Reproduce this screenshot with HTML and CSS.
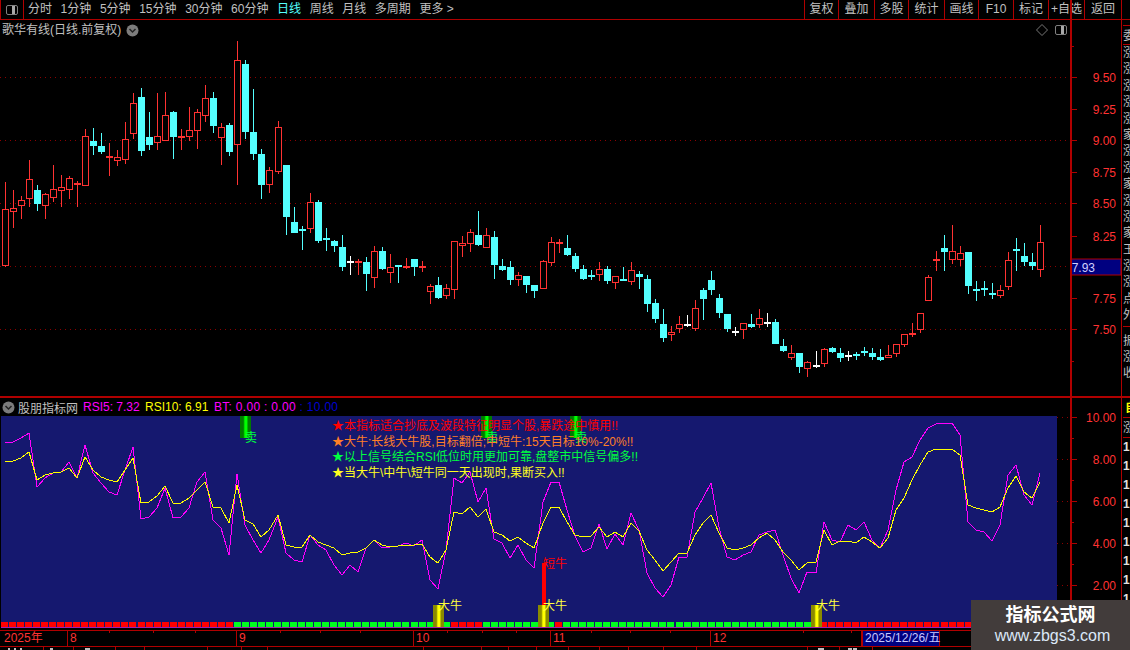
FILE: index.html
```html
<!DOCTYPE html>
<html lang="zh-CN">
<head>
  <meta charset="UTF-8">
  <title>歌华有线 日线</title>
  <link rel="stylesheet" href="styles.css">
</head>
<body>

<div class="app">
  <!-- top toolbar -->
  <div class="toolbar">
    <div class="layout-btn"><span class="toggle-icon"></span></div>
    <div class="periods">
      <span>分时</span><span>1分钟</span><span>5分钟</span><span>15分钟</span><span>30分钟</span><span>60分钟</span>
      <span class="active">日线</span><span>周线</span><span>月线</span><span>多周期</span><span>更多 &gt;</span>
    </div>
    <div class="tools">
      <span>复权</span><span>叠加</span><span>多股</span><span>统计</span><span>画线</span><span>F10</span><span>标记</span><span>+自选</span><span>返回</span>
    </div>
  </div>

  <!-- price panel -->
  <div class="main">
    <div class="plot">
      <svg id="price" class="canvas" viewBox="0 20 1070 376"></svg>
      <div class="plot-title">
        <span>歌华有线(日线.前复权)</span>
        <svg class="chevron" width="13" height="13" viewBox="0 0 13 13"><circle cx="6.5" cy="6.5" r="6" fill="#7c7c7c"/><path d="M3.5 5 L6.5 8 L9.5 5" fill="none" stroke="#222" stroke-width="1.5"/></svg>
      </div>
      <div class="plot-tools">
        <svg width="12" height="12" viewBox="0 0 12 12"><path d="M6 .5 L11.5 6 L6 11.5 L.5 6 Z" fill="none" stroke="#777"/></svg>
        <span class="toggle-icon"></span>
      </div>
    </div>
    <svg id="price-axis" class="axis" viewBox="1070 20 52 376"></svg>
    <div class="side">
      <div class="side-cell first">委</div>
      <div class="side-list">
        <span>涨</span><span>涨</span><span>涨</span><span>涨</span><span>涨</span><span>家</span><span>涨</span><span>涨</span><span>家</span><span>涨</span><span>涨</span><span>家</span><span>玉</span><span>涨</span><span>涨</span><span>点</span><span>外</span>
      </div>
      <div class="side-list lower">
        <span>振</span><span>涨</span><span>收</span>
      </div>
    </div>
  </div>

  <!-- indicator panel -->
  <div class="sub">
    <div class="sub-left">
      <div class="sub-head">
        <svg class="chevron" width="13" height="13" viewBox="0 0 13 13"><circle cx="6.5" cy="6.5" r="6" fill="#7c7c7c"/><path d="M3.5 5 L6.5 8 L9.5 5" fill="none" stroke="#222" stroke-width="1.5"/></svg>
        <span class="sub-name">股朋指标网</span>
        <span class="rsi5">RSI5: 7.32</span>
        <span class="rsi10">RSI10: 6.91</span>
        <span class="bt">BT: 0.00 : 0.00 <b>: 10.00</b></span>
      </div>
      <div class="sub-plot">
        <svg id="rsi" class="canvas" viewBox="0 416 1070 214"></svg>
        <ul class="notes">
          <li class="n-red">★本指标适合抄底及波段特征明显个股,暴跌途中慎用!!</li>
          <li class="n-orange">★大牛:长线大牛股,目标翻倍;中短牛:15天目标10%-20%!!</li>
          <li class="n-green">★以上信号结合RSI低位时用更加可靠,盘整市中信号偏多!!</li>
          <li class="n-yellow">★当大牛\中牛\短牛同一天出现时,果断买入!!</li>
        </ul>
      </div>
    </div>
    <svg id="rsi-axis" class="axis" viewBox="1070 398 52 232"></svg>
    <div class="side">
      <div class="side-cell pick">自</div>
      <div class="side-cell">涨</div>
      <div class="side-list nums">
        <span>1</span><span>1</span><span>1</span><span>1</span><span>1</span><span>1</span><span>1</span><span>1</span><span>1</span><span>1</span>
      </div>
    </div>
  </div>

  <!-- date strip -->
  <div class="dates">
    <span class="year">2025年</span>
    <span class="m8">8</span>
    <span class="m9">9</span>
    <span class="m10">10</span>
    <span class="m11">11</span>
    <span class="m12">12</span>
    <span class="cursor-date">2025/12/26/五</span>
  </div>
  <svg id="tabs" class="tabs" viewBox="0 0 1130 3"></svg>

  <div class="watermark">
    <div class="wm-name">指标公式网</div>
    <div class="wm-url">www.zbgs3.com</div>
  </div>
</div>

<script src="chart.js"></script>
</body>
</html>
```

FILE: styles.css
```css
* {
  box-sizing: border-box;
}
body {
  margin: 0;
  background-color: #000;
  font-family: "Liberation Sans", "Noto Sans CJK SC", sans-serif;
  font-size: 12px;
  color: #c0c0c0;
  overflow: hidden;
}
.app {
  position: relative;
  width: 1130px;
  height: 650px;
  display: flex;
  flex-direction: column;
  overflow: hidden;
}

/* toolbar */
.toolbar {
  height: 20px;
  display: flex;
  align-items: center;
  border-bottom: 1px solid #b00000;
  flex-shrink: 0;
}
.layout-btn {
  width: 24px;
  height: 19px;
  display: flex;
  align-items: center;
  justify-content: center;
  border-right: 1px solid #b00000;
  border-left: 1px solid #b00000;
}
.toggle-icon {
  display: block;
  width: 12px;
  height: 10px;
  border: 1px solid #808080;
  border-radius: 2px;
  background: linear-gradient(to right, #000 50%, #a8a8a8 50%, #a8a8a8 85%, #000 85%);
}
.periods {
  display: flex;
  gap: 8.6px;
  margin-left: 4px;
  line-height: 19px;
}
.periods .active {
  color: #54ffff;
}
.tools {
  display: flex;
  margin-left: auto;
  margin-right: 8px;
  border-left: 1px solid #b00000;
}
.tools span {
  width: 34px;
  height: 19px;
  line-height: 19px;
  text-align: center;
  border-right: 1px solid #b00000;
}
.tools span:nth-child(even) {
  width: 36px;
}
.tools span:nth-child(6),
.tools span:nth-child(7) {
  width: 35px;
}
.tools span:nth-child(9) {
  width: 37px;
}

/* panels */
.main {
  height: 378px;
  display: flex;
  border-bottom: 2px solid #b00000;
  flex-shrink: 0;
}
.plot {
  position: relative;
  width: 1070px;
  height: 376px;
}
.canvas {
  display: block;
  width: 1070px;
  height: 100%;
  shape-rendering: crispEdges;
}
.plot-title {
  position: absolute;
  left: 2px;
  top: 1px;
  display: flex;
  align-items: center;
  gap: 5px;
  line-height: 18px;
}
.plot-tools {
  position: absolute;
  right: 3px;
  top: 4px;
  display: flex;
  align-items: center;
  gap: 7px;
}
.axis {
  display: block;
  width: 52px;
  height: 100%;
  flex-shrink: 0;
  overflow: visible;
}
.axis text {
  fill: #ff3232;
  font-size: 12px;
  text-anchor: end;
}
.side {
  width: 8px;
  flex-shrink: 0;
  overflow: hidden;
  display: flex;
  flex-direction: column;
  white-space: nowrap;
  padding-left: 1px;
}
.side-cell {
  width: 16px;
  height: 20px;
  line-height: 20px;
  border-bottom: 1px solid #b00000;
}
.side-cell.first {
  margin-top: 5px;
  border-top: 1px solid #b00000;
}
.side-cell.pick {
  color: #ffff00;
  font-weight: bold;
  padding-left: 2px;
}
.side-list {
  display: flex;
  flex-direction: column;
  width: 16px;
}
.side-list span {
  height: 16.4px;
  line-height: 16px;
}
.side-list.lower {
  margin-top: 2px;
  border-top: 1px solid #b00000;
  padding-top: 6px;
}
.side-list.nums span {
  height: 19px;
  line-height: 19px;
  color: #e0e0e0;
  font-weight: bold;
}

.sub {
  height: 232px;
  display: flex;
  flex-shrink: 0;
}
.sub-left {
  width: 1070px;
  display: flex;
  flex-direction: column;
}
.sub-head {
  height: 18px;
  display: flex;
  align-items: center;
  padding-left: 2px;
  white-space: nowrap;
}
.sub-name {
  margin-left: 3px;
  width: 65px;
}
.rsi5 {
  color: #ff00ff;
  width: 62px;
}
.rsi10 {
  color: #ffff00;
  width: 69px;
}
.bt {
  color: #ff00ff;
  letter-spacing: .3px;
}
.bt b {
  color: #0000d0;
  font-weight: normal;
}
.sub-plot {
  position: relative;
  height: 214px;
}
.notes {
  position: absolute;
  left: 332px;
  top: 3px;
  margin: 0;
  padding: 0;
  list-style: none;
  line-height: 15.6px;
  white-space: nowrap;
}
.n-red { color: #ff0000; }
.n-orange { color: #ff7f27; }
.n-green { color: #00ff40; }
.n-yellow { color: #ffff20; }

/* date strip */
.dates {
  position: relative;
  height: 17px;
  display: flex;
  flex-shrink: 0;
  border-top: 1px solid #b00000;
  border-bottom: 1px solid #b00000;
  color: #ff3232;
  line-height: 15px;
}
.dates span {
  padding-left: 2px;
  border-right: 1px solid #b00000;
}
.year { width: 68px; padding-left: 4px !important; }
.m8 { width: 169px; }
.m9 { width: 177px; }
.m10 { width: 137px; }
.m11 { width: 160px; }
.m12 { width: 151px; }
.dates .cursor-date {
  width: 78px;
  padding-left: 2px;
  background-color: #000080;
  color: #c8c8ff;
  border-left: 1px solid #b00000;
  white-space: nowrap;
}
.tabs {
  display: block;
  width: 1130px;
  height: 3px;
  flex-shrink: 0;
  shape-rendering: crispEdges;
}

/* site stamp sitting over the corner */
.watermark {
  position: absolute;
  left: 971px;
  top: 600px;
  width: 159px;
  height: 50px;
  background-color: #423c3b;
  text-align: center;
}
.wm-name {
  margin-top: 3px;
  font-size: 18px;
  line-height: 24px;
  font-weight: bold;
  color: #fff;
}
.wm-url {
  font-size: 16px;
  line-height: 18px;
  color: #dbe8f8;
  padding-left: 4px;
}
```

FILE: chart.js
```js
const NS = 'http://www.w3.org/2000/svg';
const RED = '#ff3232', CYAN = '#54ffff', WHITE = '#ffffff';
const LINE_RED = '#b00000';

function el(parent, tag, attrs, text) {
  const node = document.createElementNS(NS, tag);
  Object.keys(attrs).forEach(k => node.setAttribute(k, attrs[k]));
  if (text) node.textContent = text;
  parent.appendChild(node);
  return node;
}

function xAt(i) {
  return Math.round(4.5 + 8.03 * i);
}

// type, body top, body bottom, high, low (page pixels)
const candles = [
  ['r',209,266,182,267],['r',208,212,190,228],['r',200,206,196,219],['r',179,199,160,207],['c',190,204,185,211],
  ['r',194,206,193,219],['r',189,198,165,202],['r',187,191,175,207],['r',178,190,176,199],['r',184,184,181,207],
  ['r',136,186,129,186],['c',141,146,128,155],['c',146,152,133,154],['r',157,157,143,176],['r',157,161,150,166],
  ['r',139,160,122,164],['r',103,134,93,139],['c',97,151,88,156],['c',137,145,112,150],['r',136,143,93,150],
  ['r',115,141,92,141],['c',112,137,111,159],['r',137,137,129,150],['r',130,137,107,141],['r',112,131,109,149],
  ['r',98,116,85,122],['c',98,126,92,133],['r',127,138,123,165],['c',125,152,123,156],['r',60,145,41,185],
  ['c',64,132,60,139],['c',132,154,89,160],['c',154,185,149,199],['r',170,185,167,193],['r',127,172,121,174],
  ['c',165,217,165,235],['c',222,233,207,233],['c',230,230,226,250],['r',202,229,193,233],['c',202,241,200,243],
  ['c',239,239,228,251],['c',241,246,240,252],['c',247,267,235,271],['w',262,262,256,275],['r',262,262,259,275],
  ['c',262,274,257,291],['r',251,278,246,288],['c',251,269,247,270],['r',267,273,254,283],['c',266,266,266,283],
  ['r',267,267,258,269],['c',259,267,259,276],['r',267,267,261,272],['r',286,292,284,304],['c',285,298,277,299],
  ['r',288,296,284,299],['r',241,290,241,299],['r',243,246,236,257],['r',232,244,229,252],['c',235,245,211,246],
  ['r',235,248,228,248],['c',237,265,231,279],['c',266,270,259,271],['c',267,280,261,285],['r',275,280,272,286],
  ['c',276,285,276,293],['c',285,291,285,298],['r',261,289,260,289],['r',242,263,237,266],['r',243,243,239,253],
  ['c',248,255,235,256],['c',256,269,253,272],['c',269,279,265,280],['c',276,276,270,280],['r',269,275,262,281],
  ['c',269,281,266,284],['r',276,283,276,289],['c',280,280,267,280],['r',270,282,262,285],['c',274,277,271,289],
  ['c',279,304,275,312],['c',303,319,299,323],['c',324,338,309,342],['r',332,335,326,341],['r',324,329,316,333],
  ['w',325,325,315,327],['r',308,329,300,331],['c',290,299,288,320],['c',280,290,271,295],['c',298,313,294,318],
  ['c',314,329,314,332],['w',332,332,327,336],['r',323,330,323,339],['c',324,327,314,328],['r',318,325,309,328],
  ['w',323,323,313,327],['c',322,344,319,344],['c',346,351,339,352],['r',353,358,345,360],['c',353,367,353,373],
  ['r',362,369,361,377],['w',366,366,351,368],['r',349,364,348,367],['c',348,352,347,353],['c',353,358,348,362],
  ['w',356,356,351,361],['c',355,355,352,360],['c',352,352,347,356],['c',353,357,348,360],['c',357,360,349,361],
  ['r',355,358,345,358],['r',344,354,344,357],['r',334,345,334,347],['r',334,334,323,337],['r',313,330,313,333],
  ['r',277,301,275,301],['r',260,260,251,271],['c',248,252,235,271],['r',251,260,225,264],['r',253,260,246,266],
  ['c',252,286,252,294],['c',290,290,281,301],['c',289,289,281,296],['c',294,294,283,299],['r',290,296,285,298],
  ['r',260,287,252,290],['c',250,250,238,271],['c',256,262,243,266],['c',262,266,253,270],['r',242,270,225,277]
];

const magenta = [442,442,438,433,487,478,473,472,462,478,445,473,483,492,495,470,447,519,517,508,488,518,517,508,482,472,520,528,555,474,
  525,540,553,540,517,553,560,562,535,545,550,565,575,565,572,548,540,548,547,546,
  543,546,540,580,589,550,478,483,472,502,488,539,543,558,545,560,568,502,482,482,510,536,552,548,524,549,534,545,513,530,
  573,588,597,585,557,557,512,498,483,527,557,560,555,552,535,532,530,555,578,593,572,573,522,540,542,525,530,522,540,548,
  530,490,462,457,440,428,424,423,423,435,522,530,532,541,525,475,465,495,505,473];
const yellow = [462,461,458,452,480,475,473,472,468,478,457,470,477,480,482,470,458,503,502,496,486,503,503,498,490,482,507,508,523,485,
  520,524,537,530,515,545,547,547,535,542,545,548,555,553,552,548,540,545,547,546,
  545,545,544,557,563,550,512,514,507,517,509,532,535,541,537,543,548,523,507,507,522,535,537,536,527,537,532,537,523,531,
  550,560,571,562,553,553,535,523,515,533,548,550,548,545,538,533,540,552,560,570,563,562,530,545,541,541,543,537,542,548,
  538,510,498,480,465,452,449,449,449,455,505,508,510,512,507,488,476,492,498,482];

function drawCandle(svg, c, i) {
  const x = xAt(i);
  const [type, top, bottom, hi, lo] = c;
  const color = type === 'r' ? RED : type === 'c' ? CYAN : WHITE;
  if (hi < top) el(svg, 'rect', { x: x, y: hi, width: 1, height: top - hi, fill: color });
  if (lo > bottom) el(svg, 'rect', { x: x, y: bottom, width: 1, height: lo - bottom, fill: color });
  if (top === bottom) {
    el(svg, 'rect', { x: x - 3, y: top - 1, width: 7, height: 2, fill: color });
  } else if (type === 'r') {
    el(svg, 'rect', { x: x - 2.5, y: top + 0.5, width: 6, height: bottom - top - 1, fill: '#000', stroke: color });
  } else {
    el(svg, 'rect', { x: x - 3, y: top, width: 7, height: bottom - top, fill: color });
  }
}

function dotted(svg, y, x1, x2) {
  el(svg, 'line', { x1: x1, x2: x2, y1: y + 0.5, y2: y + 0.5, stroke: '#8c0000', 'stroke-dasharray': '1 4' });
}

// price panel
const price = document.getElementById('price');
[77, 140, 203, 266, 329].forEach(y => dotted(price, y, 0, 1068));
candles.forEach((c, i) => drawCandle(price, c, i));

// axes
function axis(svg, labels, minor) {
  el(svg, 'rect', { x: 1070, y: 0, width: 2, height: 660, fill: LINE_RED });
  el(svg, 'rect', { x: 1121, y: 0, width: 1, height: 660, fill: LINE_RED });
  labels.forEach(l => {
    el(svg, 'rect', { x: 1071, y: l[1], width: 6, height: 1, fill: LINE_RED });
    el(svg, 'text', { x: 1116, y: l[1] + 5 }, l[0]);
  });
  minor.forEach(y => el(svg, 'rect', { x: 1071, y: y, width: 3, height: 1, fill: LINE_RED }));
}

const priceAxis = document.getElementById('price-axis');
axis(priceAxis, [['9.50',77],['9.25',109],['9.00',140],['8.75',172],['8.50',203],['8.25',236],['7.75',298],['7.50',329]], [46, 266, 361]);
el(priceAxis, 'rect', { x: 1071, y: 259, width: 50, height: 16, fill: '#000080', stroke: LINE_RED });
el(priceAxis, 'text', { x: 1095, y: 272, style: 'fill:#d0d0ff' }, '7.93');

const rsiAxis = document.getElementById('rsi-axis');
axis(rsiAxis, [['10.00',417],['8.00',459],['6.00',501],['4.00',543],['2.00',585]], [438, 480, 522, 564, 606]);

// indicator panel
const rsi = document.getElementById('rsi');
const defs = el(rsi, 'defs', {});
function gradient(id, dark, bright) {
  const g = el(defs, 'linearGradient', { id: id, x1: 0, x2: 1, y1: 0, y2: 0 });
  el(g, 'stop', { offset: '0', 'stop-color': dark });
  el(g, 'stop', { offset: '.3', 'stop-color': dark });
  el(g, 'stop', { offset: '.45', 'stop-color': bright });
  el(g, 'stop', { offset: '.6', 'stop-color': bright });
  el(g, 'stop', { offset: '.75', 'stop-color': dark });
  el(g, 'stop', { offset: '1', 'stop-color': dark });
}
gradient('sell', '#007a00', '#00ff00');
gradient('buy', '#8a8a00', '#ffff00');

el(rsi, 'rect', { x: 0, y: 415, width: 1070, height: 1, fill: '#0000ff' });
el(rsi, 'rect', { x: 1, y: 416, width: 1056, height: 212, fill: '#15186f' });
[417, 459, 501, 543, 585].forEach(y => dotted(rsi, y, 1057, 1069));

// state squares along the bottom edge
function squareColor(x) {
  if (x < 233) return '#ff0000';
  if (x < 444) return '#00ff20';
  if (x < 475) return '#ff0000';
  if (x < 549) return '#00ff20' ;
  if (x < 563) return '#ff0000';
  if (x < 811) return '#00ff20';
  return '#ff0000';
}
el(rsi, 'rect', { x: 1, y: 627, width: 1056, height: 1, fill: '#a020b0' });
for (let x = 1; x < 1056; x += 8.03) {
  el(rsi, 'rect', { x: Math.round(x), y: 622, width: 7, height: 5, fill: squareColor(x) });
}

function points(values) {
  return values.map((y, i) => xAt(i) + ',' + y).join(' ');
}
el(rsi, 'polyline', { points: points(magenta), fill: 'none', stroke: '#ff00ff' });
el(rsi, 'polyline', { points: points(yellow), fill: 'none', stroke: '#ffff00' });

// sell and buy markers
[240, 481, 570].forEach(x => {
  el(rsi, 'rect', { x: x, y: 416, width: 11, height: 22, fill: 'url(#sell)' });
  el(rsi, 'text', { x: x + 5, y: 442, fill: '#00ff40', 'font-size': 12 }, '卖');
});
el(rsi, 'rect', { x: 542, y: 563, width: 4, height: 43, fill: '#ff0000' });
el(rsi, 'text', { x: 543, y: 568, fill: '#ff0000', 'font-size': 12 }, '短牛');
[433, 538, 811].forEach(x => {
  el(rsi, 'rect', { x: x, y: 605, width: 11, height: 22, fill: 'url(#buy)' });
  el(rsi, 'text', { x: x + 5, y: 610, fill: '#ffff40', 'font-size': 12 }, '大牛');
});

// small month ticks on the date strip
const ticks = [109, 153, 195, 280, 320, 360, 447, 482, 516, 591, 630, 670, 803, 851];
const strip = document.querySelector('.dates');
const stripSvg = el(strip, 'svg', { width: 1130, height: 3, class: 'ticks' });
stripSvg.style.position = 'absolute';
stripSvg.style.left = 0;
stripSvg.style.top = 0;
ticks.forEach(x => el(stripSvg, 'rect', { x: x, y: 0, width: 1, height: 2, fill: LINE_RED }));

// tops of the tab row, cut by the window edge
const tabs = document.getElementById('tabs');
[43, 73, 115, 144, 207, 241, 267, 423, 481, 508, 536, 568, 599, 628, 663, 696, 807, 839, 872].forEach(x => {
  el(tabs, 'rect', { x: x, y: 0, width: 1, height: 3, fill: LINE_RED });
});
[[8, 2], [14, 2], [20, 2], [50, 3], [85, 5], [818, 6], [848, 4], [853, 4]].forEach(m => {
  el(tabs, 'rect', { x: m[0], y: 1, width: m[1], height: 2, fill: '#c0c0c0' });
});
```
